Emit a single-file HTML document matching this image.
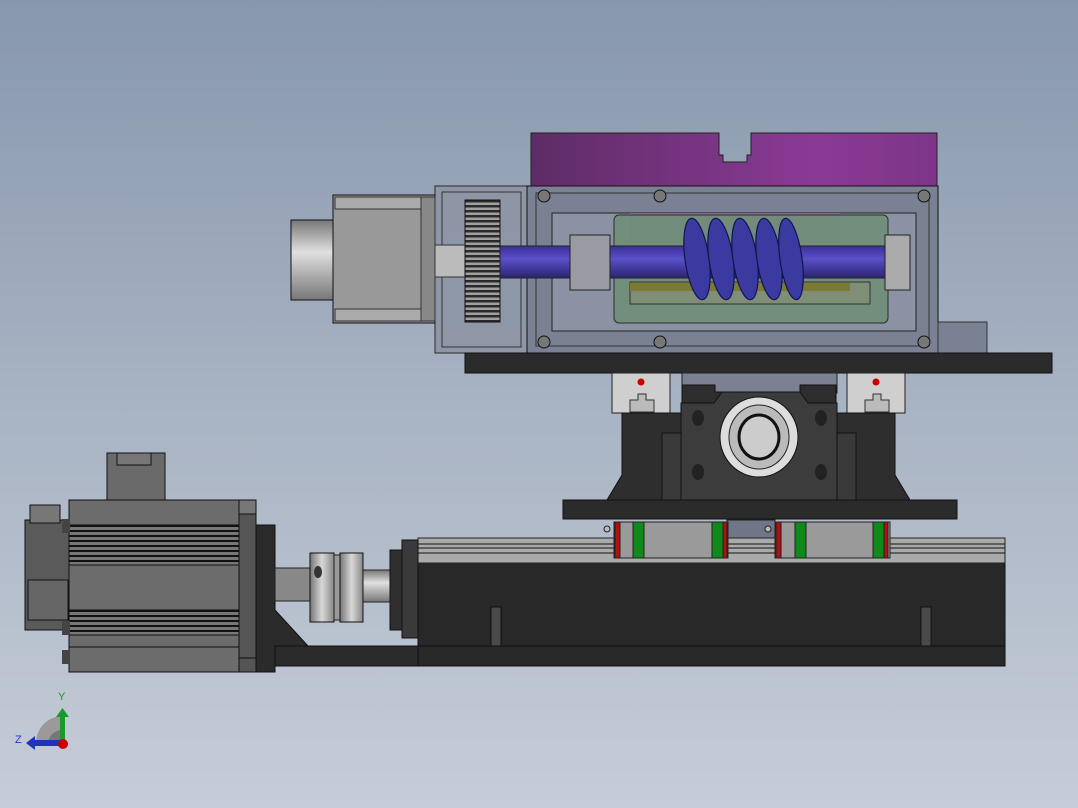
<!DOCTYPE html>
<html><head><style>
html,body{margin:0;padding:0;width:1078px;height:808px;overflow:hidden}
body{background:linear-gradient(#8797ad 0%,#a8b3c3 50%,#c6cdd8 100%);font-family:"Liberation Sans",sans-serif}
svg{position:absolute;left:0;top:0}
</style></head><body>
<svg width="1078" height="808" viewBox="0 0 1078 808">
<defs>
<linearGradient id="pur" x1="0" x2="1"><stop offset="0" stop-color="#5e2c66"/><stop offset="0.7" stop-color="#8a3a95"/><stop offset="1" stop-color="#7d3588"/></linearGradient>
<linearGradient id="shaft" x1="0" y1="0" x2="0" y2="1"><stop offset="0" stop-color="#3a2f9a"/><stop offset="0.4" stop-color="#5a50c8"/><stop offset="1" stop-color="#2a2370"/></linearGradient>
<linearGradient id="cyl" x1="0" x2="1"><stop offset="0" stop-color="#777"/><stop offset="0.5" stop-color="#d8d8d8"/><stop offset="1" stop-color="#888"/></linearGradient>
<linearGradient id="cylv" x1="0" y1="0" x2="0" y2="1"><stop offset="0" stop-color="#777"/><stop offset="0.4" stop-color="#e0e0e0"/><stop offset="1" stop-color="#777"/></linearGradient>
<pattern id="gp" width="4" height="5" patternUnits="userSpaceOnUse"><rect width="4" height="5" fill="#a0a0a0"/><rect width="4" height="2.5" fill="#2a2a2a"/></pattern>
<pattern id="fin" width="4" height="5" patternUnits="userSpaceOnUse"><rect width="4" height="5" fill="#777"/><rect width="4" height="2" fill="#111"/></pattern>
</defs>

<path d="M531 133 H719 V155 H723 V162 H747 V155 H751 V133 H937 V186 H531 Z" fill="url(#pur)" stroke="#222"/>
<rect x="435" y="186" width="93" height="167" fill="#8e96a6" stroke="#222" opacity="0.95"/>
<rect x="442" y="192" width="79" height="155" fill="none" stroke="#333"/>
<rect x="527" y="186" width="411" height="167" fill="#7a8192" stroke="#111"/>
<rect x="536" y="193" width="393" height="153" fill="none" stroke="#333"/>
<rect x="552" y="213" width="364" height="118" fill="#8a92a3" stroke="#222"/>
<rect x="630" y="213" width="210" height="30" fill="#9a6aa0" opacity="0.7"/>
<rect x="614" y="215" width="274" height="108" rx="5" fill="#6f8f78" stroke="#222" opacity="0.9"/>
<rect x="630" y="282" width="240" height="22" fill="#7f8f77" stroke="#333"/>
<rect x="630" y="283" width="220" height="8" fill="#7b7a32"/>
<rect x="291" y="220" width="43" height="80" fill="url(#cylv)" stroke="#111"/>
<rect x="333" y="195" width="102" height="128" fill="#999" stroke="#111"/>
<rect x="335" y="197" width="86" height="12" fill="#aaa" stroke="#333"/>
<rect x="335" y="309" width="86" height="12" fill="#aaa" stroke="#333"/>
<rect x="421" y="197" width="14" height="124" fill="#888" stroke="#333"/>
<rect x="435" y="245" width="30" height="32" fill="#bbb" stroke="#333"/>
<rect x="465" y="200" width="35" height="122" fill="url(#gp)" stroke="#111"/>
<rect x="500" y="246" width="410" height="32" fill="url(#shaft)" stroke="#222"/>
<rect x="570" y="235" width="40" height="55" fill="#9a9aa2" stroke="#222"/>
<rect x="885" y="235" width="25" height="55" fill="#aaa" stroke="#222"/>
<g fill="#3b3aa0" stroke="#121450" stroke-width="1.2">
<ellipse cx="697" cy="259" rx="12" ry="41" transform="rotate(-8 697 259)"/>
<ellipse cx="721" cy="259" rx="12" ry="41" transform="rotate(-8 721 259)"/>
<ellipse cx="745" cy="259" rx="12" ry="41" transform="rotate(-8 745 259)"/>
<ellipse cx="769" cy="259" rx="12" ry="41" transform="rotate(-8 769 259)"/>
<ellipse cx="791" cy="259" rx="11" ry="41" transform="rotate(-8 791 259)"/>
</g>
<g fill="#777" stroke="#111"><circle cx="544" cy="196" r="6"/><circle cx="660" cy="196" r="6"/><circle cx="924" cy="196" r="6"/><circle cx="544" cy="342" r="6"/><circle cx="660" cy="342" r="6"/><circle cx="924" cy="342" r="6"/></g>
<rect x="938" y="322" width="49" height="31" fill="#7a8192" stroke="#333"/>
<rect x="465" y="353" width="587" height="20" fill="#2b2b2b" stroke="#111"/>
<g fill="#cfcfcf" stroke="#222">
<rect x="612" y="373" width="58" height="40"/><rect x="847" y="373" width="58" height="40"/>
</g>
<circle cx="641" cy="382" r="3.5" fill="#c00"/><circle cx="876" cy="382" r="3.5" fill="#c00"/>
<path d="M630 400 h8 v-6 h8 v6 h8 v12 h-24 z" fill="#bbb" stroke="#333"/>
<path d="M865 400 h8 v-6 h8 v6 h8 v12 h-24 z" fill="#bbb" stroke="#333"/>
<rect x="682" y="373" width="155" height="20" fill="#7a8192" stroke="#222"/>
<path d="M622 413 H682 V385 H715 V392 H800 V385 H836 V413 H895 V475 L910 500 H607 L622 475 Z" fill="#2e2e2e" stroke="#111"/>
<path d="M714 403 L722 392 H800 L808 403 H837 V500 H681 V403 Z" fill="#3c3c3c" stroke="#111"/>
<rect x="662" y="433" width="19" height="67" fill="#3a3a3a" stroke="#111"/>
<rect x="837" y="433" width="19" height="67" fill="#3a3a3a" stroke="#111"/>
<ellipse cx="759" cy="437" rx="39" ry="40" fill="#ddd" stroke="#111"/>
<ellipse cx="759" cy="437" rx="30" ry="32" fill="#bbb" stroke="#222"/>
<ellipse cx="759" cy="437" rx="20" ry="22" fill="#ccc" stroke="#111" stroke-width="3"/>
<g fill="#222"><ellipse cx="698" cy="418" rx="6" ry="8"/><ellipse cx="821" cy="418" rx="6" ry="8"/><ellipse cx="698" cy="472" rx="6" ry="8"/><ellipse cx="821" cy="472" rx="6" ry="8"/></g>
<rect x="563" y="500" width="394" height="19" fill="#2b2b2b" stroke="#111"/>
<rect x="418" y="538" width="587" height="128" fill="#282828" stroke="#111"/>
<rect x="418" y="538" width="587" height="25" fill="#aaa" stroke="#222"/>
<g stroke="#111"><line x1="418" y1="544" x2="1005" y2="544"/><line x1="418" y1="548" x2="1005" y2="548"/><line x1="418" y1="553" x2="1005" y2="553"/></g>
<line x1="418" y1="646" x2="1005" y2="646" stroke="#111"/>
<rect x="921" y="607" width="10" height="39" fill="#4a4a4a" stroke="#111"/>
<rect x="491" y="607" width="10" height="39" fill="#4a4a4a" stroke="#111"/>
<rect x="727" y="520" width="48" height="18" fill="#6f7688" stroke="#222"/>
<g stroke="#222">
<rect x="614" y="522" width="114" height="36" fill="#9a9a9a"/>
<rect x="615" y="522" width="5" height="36" fill="#b01010"/><rect x="633" y="522" width="11" height="36" fill="#0f8a1a"/>
<rect x="712" y="522" width="11" height="36" fill="#0f8a1a"/><rect x="723" y="522" width="4" height="36" fill="#b01010"/>
<rect x="775" y="522" width="115" height="36" fill="#9a9a9a"/>
<rect x="776" y="522" width="5" height="36" fill="#b01010"/><rect x="795" y="522" width="11" height="36" fill="#0f8a1a"/>
<rect x="873" y="522" width="11" height="36" fill="#0f8a1a"/><rect x="884" y="522" width="4" height="36" fill="#b01010"/>
</g>
<circle cx="607" cy="529" r="3" fill="#bbb" stroke="#222"/><circle cx="768" cy="529" r="3" fill="#bbb" stroke="#222"/>
<rect x="275" y="646" width="143" height="20" fill="#2b2b2b" stroke="#111"/>
<path d="M255 525 H275 V610 L308 646 H275 V672 H255 Z" fill="#2b2b2b" stroke="#111"/>
<rect x="275" y="568" width="35" height="33" fill="#888" stroke="#222"/>
<rect x="360" y="570" width="30" height="32" fill="url(#cylv)" stroke="#222"/>
<rect x="310" y="553" width="24" height="69" fill="url(#cyl)" stroke="#111"/>
<rect x="334" y="555" width="6" height="65" fill="#999" stroke="#222"/>
<rect x="340" y="553" width="23" height="69" fill="url(#cyl)" stroke="#111"/>
<ellipse cx="318" cy="572" rx="4" ry="6" fill="#333"/>
<rect x="390" y="550" width="12" height="80" fill="#2f2f2f" stroke="#111"/>
<rect x="402" y="540" width="16" height="98" fill="#3a3a3a" stroke="#111"/>
<rect x="107" y="453" width="58" height="47" fill="#6a6a6a" stroke="#111"/>
<rect x="117" y="453" width="34" height="12" fill="#777" stroke="#111"/>
<rect x="25" y="520" width="44" height="110" fill="#5a5a5a" stroke="#111"/>
<rect x="30" y="505" width="30" height="18" fill="#777" stroke="#111"/>
<rect x="28" y="580" width="40" height="40" fill="#666" stroke="#111"/>
<rect x="69" y="500" width="170" height="172" fill="#6c6c6c" stroke="#111"/>
<rect x="69" y="525" width="170" height="40" fill="url(#fin)" stroke="#111"/>
<rect x="69" y="610" width="170" height="25" fill="url(#fin)" stroke="#111"/>
<line x1="69" y1="647" x2="239" y2="647" stroke="#111"/>
<rect x="239" y="500" width="17" height="172" fill="#555" stroke="#111"/>
<rect x="239" y="500" width="17" height="14" fill="#777" stroke="#111"/>
<rect x="239" y="658" width="17" height="14" fill="#555" stroke="#111"/>
<rect x="62" y="519" width="8" height="14" fill="#444"/><rect x="62" y="621" width="8" height="14" fill="#444"/><rect x="62" y="650" width="8" height="14" fill="#444"/>
<path d="M36 744 A27 27 0 0 1 62 716 V744 Z" fill="#9a9a9a"/>
<path d="M48 744 A14 14 0 0 1 62 730 V744 Z" fill="#777"/>
<rect x="60" y="716" width="5" height="28" fill="#1a9a2a"/>
<path d="M56 717 L62.5 708 L69 717 Z" fill="#1a9a2a"/>
<rect x="34" y="740" width="28" height="6" fill="#2233bb"/>
<path d="M35 736 L26 743 L35 750 Z" fill="#2233bb"/>
<circle cx="63" cy="744" r="5" fill="#c00"/>
<text x="58" y="700" font-size="11" fill="#1a9a2a" font-family="Liberation Sans">Y</text>
<text x="15" y="743" font-size="11" fill="#2233cc" font-family="Liberation Sans">Z</text>
</svg>
</body></html>
